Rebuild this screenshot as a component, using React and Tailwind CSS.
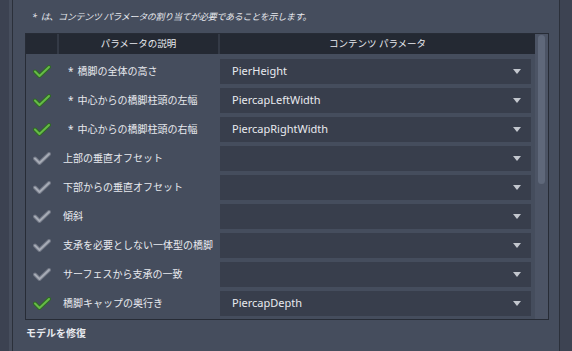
import React from 'react'

const rows = [
  { label: "橋脚の全体の高さ", required: true, value: "PierHeight", done: true },
  { label: "中心からの橋脚柱頭の左幅", required: true, value: "PiercapLeftWidth", done: true },
  { label: "中心からの橋脚柱頭の右幅", required: true, value: "PiercapRightWidth", done: true },
  { label: "上部の垂直オフセット", required: false, value: "", done: false },
  { label: "下部からの垂直オフセット", required: false, value: "", done: false },
  { label: "傾斜", required: false, value: "", done: false },
  { label: "支承を必要としない一体型の橋脚", required: false, value: "", done: false },
  { label: "サーフェスから支承の一致", required: false, value: "", done: false },
  { label: "橋脚キャップの奥行き", required: false, value: "PiercapDepth", done: true },
]

const Check = ({ done }) => (
  <svg width="18" height="13" viewBox="0 0 18 13">
    <polyline points="2,6.5 6.5,11 16,2" fill="none"
      stroke={done ? "#2f6a25" : "#6f7583"} strokeWidth="4" strokeLinecap="round" strokeLinejoin="round" />
    <polyline points="2,6.5 6.5,11 16,2" fill="none"
      stroke={done ? "#66bb47" : "#a6abb5"} strokeWidth="2" strokeLinecap="round" strokeLinejoin="round" />
  </svg>
)

const Arrow = () => (
  <svg width="8" height="5" viewBox="0 0 8 5">
    <polygon points="0,0 8,0 4,5" fill="#c3c7ce" />
  </svg>
)

const App = () => {
  return (
    <div className="w-[572px] h-[351px] flex bg-[#3c4251] text-[#e8eaef] overflow-hidden"
      style={{ fontFamily: '"Noto Sans", "Noto Sans CJK JP", sans-serif' }}>
      <div className="w-[13px] h-full border-r border-[#2b303a] flex justify-end">
        <div className="w-[3px] h-full bg-[#474e5d]"></div>
      </div>

      <div className="flex-1 h-full bg-[#454d5d] flex flex-col">
        <div className="h-[33px] pl-[19px] pt-[1px] flex items-center text-[9px] italic tracking-[-0.3px]">
          <span className="mr-[4px]">*</span>
          <span>は、コンテンツ パラメータの割り当てが必要であることを示します。</span>
        </div>

        <div className="ml-[12px] w-[524px] h-[287px] border border-[#272c36] flex">
          <div className="flex-1 flex flex-col">
            <div className="h-[20px] flex gap-[2px] bg-[#343a46] text-[9.5px]">
              <div className="w-[31px] bg-[#242933]"></div>
              <div className="w-[159px] bg-[#242933] flex items-center justify-center">パラメータの説明</div>
              <div className="flex-1 bg-[#242933] flex items-center justify-center">コンテンツ パラメータ</div>
            </div>
            <div className="flex flex-col gap-[4px] pt-[5px]">
              {rows.map((r, i) => (
                <div key={i} className="h-[25px] flex items-center">
                  <div className="w-[33px] pl-[7px] flex items-center">
                    <Check done={r.done} />
                  </div>
                  <div className={`w-[161px] text-[10px] whitespace-nowrap ${r.required ? 'pl-[9px]' : 'pl-[4px]'}`}>
                    {r.required && <span className="mr-[4px]">*</span>}
                    {r.label}
                  </div>
                  <div className="w-[311px] h-[25px] bg-[#383e4c] flex items-center justify-between pl-[12px] pr-[10px] text-[11px]">
                    <span>{r.value}</span>
                    <Arrow />
                  </div>
                </div>
              ))}
            </div>
          </div>
          <div className="w-[13px] h-full bg-[#4c5465] pt-[1px] pl-[3px]">
            <div className="w-[7px] h-[149px] rounded-full bg-[#5f687a]"></div>
          </div>
        </div>

        <div className="flex-1 flex items-center pl-[13px] pb-[5px] text-[10px] font-bold">
          モデルを修復
        </div>
      </div>

      <div className="w-[13px] h-full border-l border-[#2b303a] bg-[#3d4352]"></div>
    </div>
  )
}

export default App
